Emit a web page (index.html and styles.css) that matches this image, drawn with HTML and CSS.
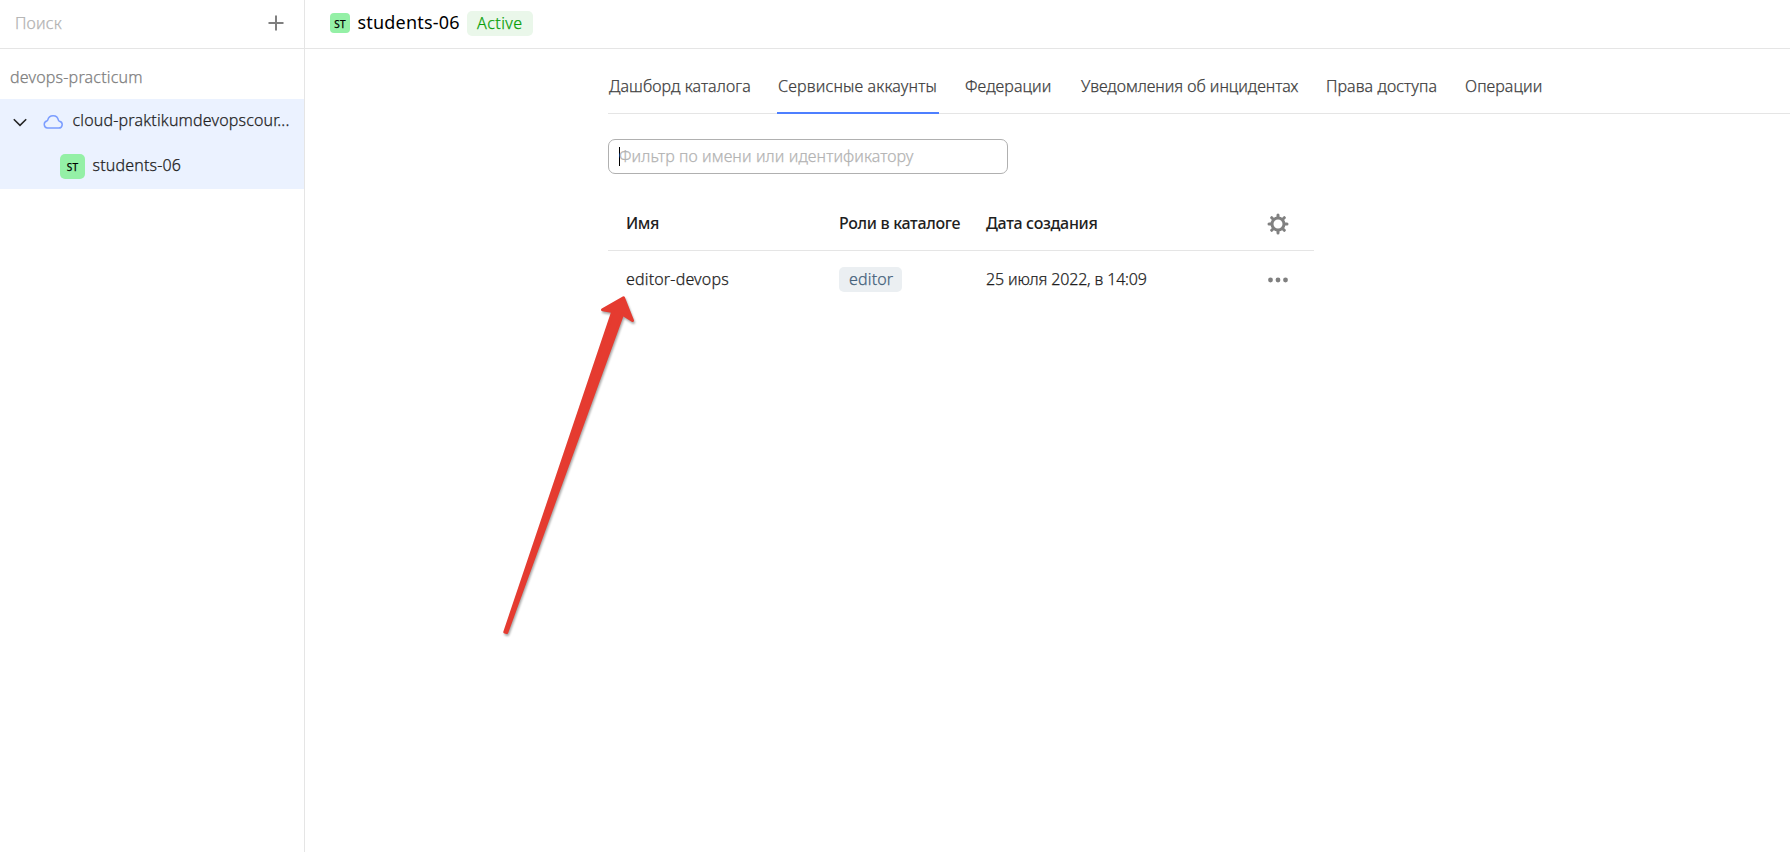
FILE: index.html
```html
<!DOCTYPE html>
<html lang="ru">
<head>
<meta charset="utf-8">
<title>students-06</title>
<link rel="stylesheet" href="styles.css">
</head>
<body>
<div class="app">
  <aside class="sidebar">
    <div class="search">
      <span class="search-hint">Поиск</span>
      <svg width="16" height="16" viewBox="0 0 16 16" fill="none" stroke="#7f7f7f" stroke-width="2"><path d="M8 .5v15M.5 8h15"/></svg>
    </div>
    <div class="org">devops-practicum</div>
    <div class="tree">
      <div class="tree-row cloud-row">
        <svg class="chevron" width="14" height="9" viewBox="0 0 14 9" fill="none" stroke="#262626" stroke-width="1.6"><path d="M.8 1.2 7 7.4l6.200-6.200"/></svg>
        <svg class="cloud" width="20" height="15" viewBox="0 0 20 15" fill="none" stroke="#7b9dff" stroke-width="1.5"><path d="M4.500 14.100h11.100a3.500 3.500 0 0 0 .9-6.900c-.7-.2-1-.5-1.100-1.100a5.400 5.400 0 0 0-10.600-.2c-.1.600-.4.900-1 1.100a3.650 3.650 0 0 0 .7 7.100z"/></svg>
        <span class="cloud-name">cloud-praktikumdevopscour...</span>
      </div>
      <div class="tree-row folder-row">
        <span class="badge">ST</span>
        <span class="folder-name">students-06</span>
      </div>
    </div>
  </aside>
  <main class="main">
    <header class="header">
      <span class="badge badge-small">ST</span>
      <h1 class="title">students-06</h1>
      <span class="status">Active</span>
    </header>
    <div class="content">
      <nav class="tabs">
        <span class="tab t1">Дашборд каталога</span>
        <span class="tab t2 active">Сервисные аккаунты</span>
        <span class="tab t3">Федерации</span>
        <span class="tab t4">Уведомления об инцидентах</span>
        <span class="tab t5">Права доступа</span>
        <span class="tab t6">Операции</span>
      </nav>
      <div class="filter"><i class="caret"></i><span class="hint">Фильтр по имени или идентификатору</span></div>
      <div class="table">
        <div class="row head">
          <span class="h1">Имя</span>
          <span class="h2">Роли в каталоге</span>
          <span class="h3">Дата создания</span>
          <svg class="gear" width="22" height="22" viewBox="-11 -11 22 22"><g fill="none" stroke="#808080"><circle r="6" stroke-width="3"/><path stroke-width="3" stroke-linecap="round" d="M0-7v-2M0 7v2M-7 0h-2M7 0h2M-5-5l-1.300-1.300M5-5l1.300-1.300M-5 5l-1.300 1.300M5 5l1.300 1.300"/></g></svg>
        </div>
        <div class="row">
          <span class="name">editor-devops</span>
          <span class="role">editor</span>
          <span class="date">25 июля 2022, в 14:09</span>
          <svg class="dots" width="22" height="6" viewBox="0 0 22 6" fill="#7f7f7f"><circle cx="3.500" cy="3" r="2.400"/><circle cx="11" cy="3" r="2.400"/><circle cx="18.500" cy="3" r="2.400"/></svg>
        </div>
      </div>
    </div>
  </main>
</div>
<svg class="arrow" width="160" height="370" viewBox="0 0 160 370"><path fill="#e53b30" stroke="#e53b30" stroke-width="3" stroke-linejoin="round" d="M133.500 17.700 142.500 40.500 132.600 34.200 16.800 352.500 14.800 352 122.800 31.400 112.500 29.700Z"/></svg>
</body>
</html>
```

FILE: styles.css
```css
* { box-sizing: border-box; }

body {
  margin: 0;
  font: 300 16px/20px "Noto Sans", sans-serif;
  letter-spacing: 0.17px;
  color: #1f1f1f;
  background: #fff;
  white-space: nowrap;
  overflow: hidden;
  -webkit-text-stroke: 0.25px currentColor;
}

.app { display: flex; height: 852px; }
svg { display: block; flex: none; }

/* Sidebar */
.sidebar { width: 305px; flex: none; border-right: 1px solid #e5e5e5; }
.search {
  height: 49px;
  padding: 0 20px 2px 15px;
  display: flex;
  align-items: center;
  justify-content: space-between;
  border-bottom: 1px solid #e5e5e5;
}
.search-hint { color: #b3b3b3; }
.org { height: 50px; padding: 18px 0 0 10px; color: #808080; letter-spacing: 0.19px; }
.tree { background: #ebf2ff; height: 90px; }
.tree-row { display: flex; height: 45px; }
.cloud-row { padding: 11px 0 0 13px; }
.chevron { margin-top: 8px; }
.cloud { margin: 4px 9.500px 0 16px; }
.folder-row { padding: 10px 0 0 60px; gap: 7.500px; }
.folder-name { margin-top: 1px; }
.badge {
  width: 25px;
  height: 25px;
  border-radius: 5px;
  background: #94f0a6;
  color: #000;
  font-size: 10px;
  font-weight: 400;
  line-height: 27px;
  text-align: center;
}

/* Header */
.main { flex: 1; min-width: 0; }
.header {
  height: 49px;
  padding: 0 0 3px 25px;
  display: flex;
  align-items: center;
  border-bottom: 1px solid #e5e5e5;
}
.badge-small { width: 20px; height: 20px; border-radius: 4px; line-height: 22px; }
.title {
  margin: 0 7.500px;
  padding-bottom: 2px;
  width: 102px;
  font-size: 18px;
  font-weight: 400;
  line-height: 24px;
  letter-spacing: 0.2px;
  color: #000;
  -webkit-text-stroke: 0;
}
.status {
  height: 25px;
  width: 66px;
  margin-top: 1px;
  padding-left: 10px;
  border-radius: 5px;
  background: #eaf7ea;
  color: #0a9f0a;
  line-height: 24px;
  letter-spacing: 0.45px;
}

/* Tabs */
.content { padding-left: 303px; }
.tabs { display: flex; gap: 25px; height: 65px; border-bottom: 1px solid #e5e5e5; }
.tab { height: 65px; padding: 27px 0 0 1px; color: #404040; letter-spacing: 0.09px; }
.active { border-bottom: 2px solid #4d7fff; }
.t1 { width: 144px; }
.t2 { width: 162px; letter-spacing: 0.16px; }
.t3 { width: 91px; }
.t4 { width: 220px; letter-spacing: -0.03px; }
.t5 { width: 114px; }

.filter {
  display: flex;
  align-items: center;
  width: 400px;
  height: 35px;
  margin-top: 25px;
  padding: 0 0 1px 10px;
  border: 1px solid #b0b0b0;
  border-radius: 7px;
}
.caret { width: 1px; height: 19px; background: #000; }
.hint { margin-left: -1px; color: #b3b3b3; letter-spacing: 0.09px; }

/* Accounts table */
.table { width: 706px; margin-top: 21px; }
.row {
  display: grid;
  grid-template-columns: 213px 147px 280.500px 22px;
  align-items: center;
  height: 57px;
  padding-left: 18px;
}
.head { height: 56px; border-bottom: 1px solid #e5e5e5; font-weight: 500; -webkit-text-stroke: 0; }
.h1 { letter-spacing: -0.4px; }
.h2, .h3 { letter-spacing: -0.32px; }
.gear { margin-top: 2px; }
.name, .date { padding-bottom: 2px; }
.role {
  width: 63px;
  height: 25px;
  padding-left: 10px;
  border-radius: 5px;
  background: #ebeff2;
  color: #44617b;
  line-height: 24px;
}
.date { letter-spacing: -0.16px; }

/* Pointer drawn over the page */
.arrow { position: absolute; left: 490px; top: 280px; filter: drop-shadow(1.500px 2px 1px rgba(0, 0, 0, .35)); }
```
